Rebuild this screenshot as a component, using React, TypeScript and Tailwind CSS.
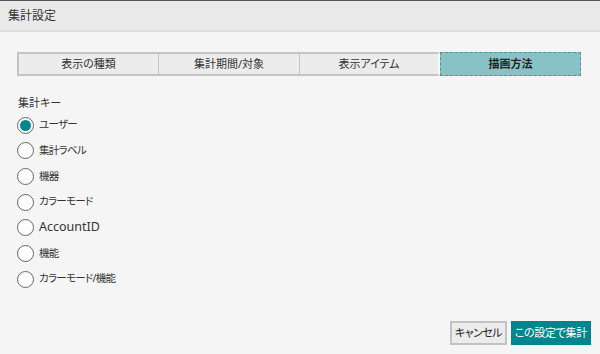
const TABS = ["表示の種類", "集計期間/対象", "表示アイテム", "描画方法"];
const KEYS = ["ユーザー", "集計ラベル", "機器", "カラーモード", "AccountID", "機能", "カラーモード/機能"];

export default function App() {
  return (
    <div
      className="w-[600px] h-[354px] flex flex-col bg-[#f5f5f5] text-[#333] overflow-hidden border-t border-[#555] [font-feature-settings:'palt']"
      style={{ fontFamily: '"Noto Sans", "Noto Sans CJK JP", sans-serif' }}
    >
      {/* Header */}
      <div className="h-[31px] shrink-0 flex items-center px-[8px] bg-[#e9e9e9] border-b-2 border-[#dcdcdc] text-[12px]">
        集計設定
      </div>

      <div className="flex-1 flex flex-col px-[17px] pt-[20px] pb-[9px]">
        {/* Tabs */}
        <div className="grid grid-cols-4 w-[564px] h-[24px] text-[11px]">
          {TABS.map((t, i) =>
            i === TABS.length - 1 ? (
              <div
                key={t}
                className="flex items-center justify-center bg-[#88c2c4] border border-dashed border-[#5d8f91] font-bold text-[#222]"
              >
                {t}
              </div>
            ) : (
              <div
                key={t}
                className={`flex items-center justify-center bg-[#ececec] border-t-2 border-b-2 border-[#c4c4c4] ${
                  i === 0 ? "border-l-2" : "border-l"
                } ${i === 2 ? "border-r-2 border-r-[#f8f8f8]" : ""}`}
              >
                {t}
              </div>
            )
          )}
        </div>

        {/* Keys */}
        <div className="mt-[21px] text-[11px] leading-none pl-[1px]">集計キー</div>
        <div className="flex flex-col mt-[8px] gap-[7.7px]">
          {KEYS.map((k, i) => (
            <label key={k} className="flex items-center h-[18px] gap-[5px]">
              <span className="w-[17px] h-[17px] rounded-full border-[1.5px] border-[#666] bg-white flex items-center justify-center">
                {i === 0 && <span className="w-[11px] h-[11px] rounded-full bg-[#00868c]" />}
              </span>
              <span className={k === "AccountID" ? "text-[12.5px]" : "text-[10.5px] tracking-[-0.7px]"}>{k}</span>
            </label>
          ))}
        </div>

        {/* Buttons */}
        <div className="mt-auto flex justify-end gap-[4px]">
          <button className="h-[24px] px-[3px] bg-[#ececec] border-2 border-[#c2c2c2] text-[11px] tracking-[-0.6px] text-[#222]">
            キャンセル
          </button>
          <button className="h-[24px] px-[4px] bg-[#00868c] text-white text-[11px] tracking-[-0.3px] mr-[-8px]">
            この設定で集計
          </button>
        </div>
      </div>
    </div>
  );
}
